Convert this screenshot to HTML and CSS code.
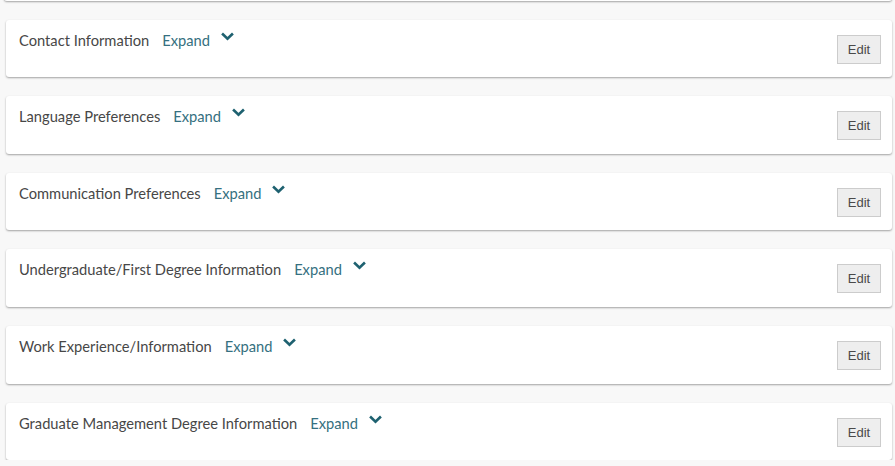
FILE: index.html
```html
<!DOCTYPE html>
<html>
<head>
<meta charset="utf-8">
<link rel="stylesheet" href="styles.css">
</head>
<body>
<div class="list">
  <div class="card card-prev"></div>
  <div class="card">
    <div class="head"><span class="title">Contact Information</span><span class="expand">Expand</span><svg class="chev" viewBox="0 0 12 8"><path d="M1 1.2 L6 6 L11 1.2"/></svg></div>
    <button class="edit">Edit</button>
  </div>
  <div class="card">
    <div class="head"><span class="title">Language Preferences</span><span class="expand">Expand</span><svg class="chev" viewBox="0 0 12 8"><path d="M1 1.2 L6 6 L11 1.2"/></svg></div>
    <button class="edit">Edit</button>
  </div>
  <div class="card">
    <div class="head"><span class="title">Communication Preferences</span><span class="expand">Expand</span><svg class="chev" viewBox="0 0 12 8"><path d="M1 1.2 L6 6 L11 1.2"/></svg></div>
    <button class="edit">Edit</button>
  </div>
  <div class="card">
    <div class="head"><span class="title">Undergraduate/First Degree Information</span><span class="expand">Expand</span><svg class="chev" viewBox="0 0 12 8"><path d="M1 1.2 L6 6 L11 1.2"/></svg></div>
    <button class="edit">Edit</button>
  </div>
  <div class="card">
    <div class="head"><span class="title">Work Experience/Information</span><span class="expand">Expand</span><svg class="chev" viewBox="0 0 12 8"><path d="M1 1.2 L6 6 L11 1.2"/></svg></div>
    <button class="edit">Edit</button>
  </div>
  <div class="card">
    <div class="head"><span class="title">Graduate Management Degree Information</span><span class="expand">Expand</span><svg class="chev" viewBox="0 0 12 8"><path d="M1 1.2 L6 6 L11 1.2"/></svg></div>
    <button class="edit">Edit</button>
  </div>
</div>
</body>
</html>
```

FILE: styles.css
```css
html, body {
  margin: 0;
  padding: 0;
  background: #f8f8f8;
  overflow: hidden;
}
.list {
  display: flex;
  flex-direction: column;
  gap: 19px;
  padding: 0 3px 0 6px;
}
.card {
  box-sizing: border-box;
  height: 57.6px;
  background: #fff;
  border-radius: 3px;
  box-shadow: 0 1px 2px rgba(0, 0, 0, 0.35);
  display: flex;
  justify-content: space-between;
  align-items: flex-start;
  padding: 0 11px 0 13px;
}
.card-prev {
  margin-top: -57px;
  margin-left: -2px;
  flex: none;
}
.head {
  display: flex;
  align-items: center;
  padding-top: 11px;
  font-family: "Lato", "Liberation Sans", sans-serif;
  font-size: 14.7px;
  line-height: 18px;
}
.title {
  color: #474747;
}
.expand {
  color: #357080;
  margin-left: 13px;
}
.chev {
  width: 13px;
  height: 9px;
  margin-left: 11px;
  margin-top: -7px;
  fill: none;
  stroke: #1e6170;
  stroke-width: 2.4;
}
.edit {
  margin-top: 15px;
  width: 44px;
  height: 29px;
  background: #eeeeee;
  border: 1px solid #cccccc;
  border-radius: 0;
  font-family: "Liberation Sans", Arial, sans-serif;
  font-size: 13px;
  color: #4a4a4a;
  padding: 0;
}
```
